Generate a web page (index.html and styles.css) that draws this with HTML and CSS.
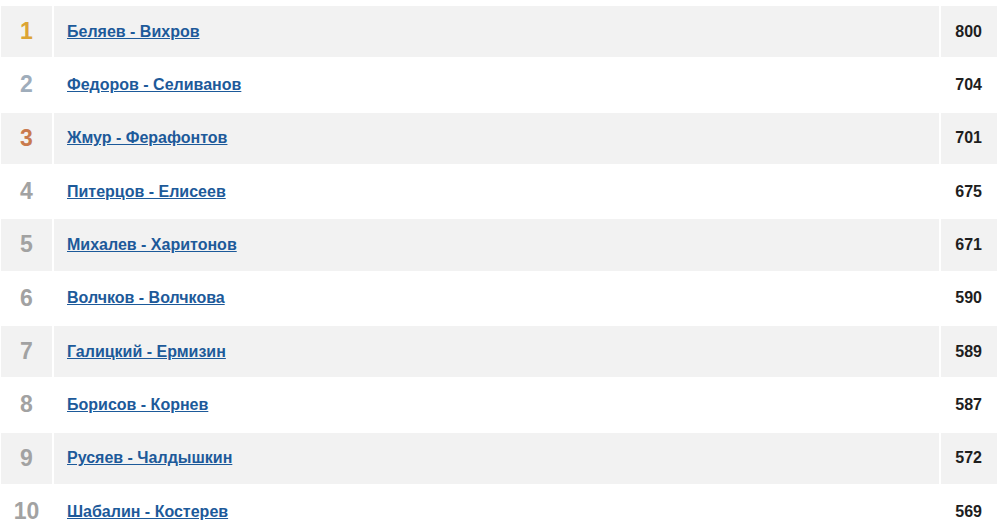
FILE: index.html
```html
<!DOCTYPE html>
<html lang="ru">
<head>
<meta charset="utf-8">
<title>Рейтинг</title>
<link rel="stylesheet" href="styles.css">
</head>
<body>
<table class="rating">
  <tr class="odd"><td class="place gold">1</td><td class="name"><a href="#">Беляев - Вихров</a></td><td class="score">800</td></tr>
  <tr><td class="place silver">2</td><td class="name"><a href="#">Федоров - Селиванов</a></td><td class="score">704</td></tr>
  <tr class="odd"><td class="place bronze">3</td><td class="name"><a href="#">Жмур - Ферафонтов</a></td><td class="score">701</td></tr>
  <tr><td class="place">4</td><td class="name"><a href="#">Питерцов - Елисеев</a></td><td class="score">675</td></tr>
  <tr class="odd"><td class="place">5</td><td class="name"><a href="#">Михалев - Харитонов</a></td><td class="score">671</td></tr>
  <tr><td class="place">6</td><td class="name"><a href="#">Волчков - Волчкова</a></td><td class="score">590</td></tr>
  <tr class="odd"><td class="place">7</td><td class="name"><a href="#">Галицкий - Ермизин</a></td><td class="score">589</td></tr>
  <tr><td class="place">8</td><td class="name"><a href="#">Борисов - Корнев</a></td><td class="score">587</td></tr>
  <tr class="odd"><td class="place">9</td><td class="name"><a href="#">Русяев - Чалдышкин</a></td><td class="score">572</td></tr>
  <tr><td class="place">10</td><td class="name"><a href="#">Шабалин - Костерев</a></td><td class="score">569</td></tr>
</table>
</body>
</html>
```
FILE: styles.css
```css
html, body {
  margin: 0;
  padding: 0;
  background: #ffffff;
}
body {
  padding-top: 4px;
  font-family: "Liberation Sans", Arial, sans-serif;
}
.rating {
  width: 1000px;
  margin-left: -1px;
  border-collapse: separate;
  border-spacing: 2px;
}
.rating td {
  height: 51.33px;
  padding: 0;
  vertical-align: middle;
}
.rating tr.odd td {
  background: #f2f2f2;
}
.place {
  width: 51px;
  text-align: center;
  font-size: 23px;
  font-weight: bold;
  color: #a2a2a2;
}
.place.gold { color: #dca434; }
.place.silver { color: #9fadbb; }
.place.bronze { color: #c97a4e; }
.name {
  padding-left: 13px !important;
  font-size: 16px;
  font-weight: bold;
}
.name a {
  color: #1d5a9a;
  text-decoration: underline;
}
.score {
  width: 41px;
  padding-right: 15px !important;
  text-align: right;
  font-size: 16px;
  font-weight: bold;
  color: #1e1e1e;
}
```
